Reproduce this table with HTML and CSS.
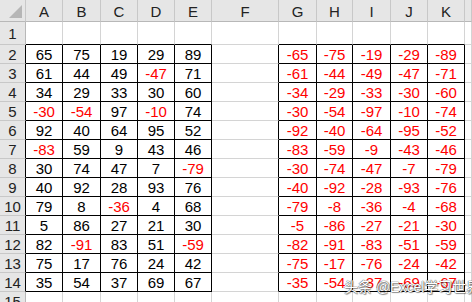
FILE: index.html
```html
<!DOCTYPE html>
<html lang="zh">
<head>
<meta charset="utf-8">
<title>Excel</title>
<link rel="stylesheet" href="styles.css">
</head>
<body>
<div class="sheet">
  <div class="row hdr"><span class="corner"><i class="tri"></i></span><span>A</span><span>B</span><span>C</span><span>D</span><span>E</span><span>F</span><span>G</span><span>H</span><span>I</span><span>J</span><span>K</span><span></span></div>
  <div class="row r1"><span class="rh">1</span><span class="bt"></span><span class="bt"></span><span class="bt"></span><span class="bt"></span><span class="bt"></span><span></span><span class="bt"></span><span class="bt"></span><span class="bt"></span><span class="bt"></span><span class="bt"></span><span></span></div>
  <div class="row"><span class="rh bl">2</span><span class="d">65</span><span class="d">75</span><span class="d">19</span><span class="d">29</span><span class="d">89</span><span class="bl"></span><span class="d n">-65</span><span class="d n">-75</span><span class="d n">-19</span><span class="d n">-29</span><span class="d n">-89</span><span></span></div>
  <div class="row"><span class="rh bl">3</span><span class="d">61</span><span class="d">44</span><span class="d">49</span><span class="d n">-47</span><span class="d">71</span><span class="bl"></span><span class="d n">-61</span><span class="d n">-44</span><span class="d n">-49</span><span class="d n">-47</span><span class="d n">-71</span><span></span></div>
  <div class="row"><span class="rh bl">4</span><span class="d">34</span><span class="d">29</span><span class="d">33</span><span class="d">30</span><span class="d">60</span><span class="bl"></span><span class="d n">-34</span><span class="d n">-29</span><span class="d n">-33</span><span class="d n">-30</span><span class="d n">-60</span><span></span></div>
  <div class="row"><span class="rh bl">5</span><span class="d n">-30</span><span class="d n">-54</span><span class="d">97</span><span class="d n">-10</span><span class="d">74</span><span class="bl"></span><span class="d n">-30</span><span class="d n">-54</span><span class="d n">-97</span><span class="d n">-10</span><span class="d n">-74</span><span></span></div>
  <div class="row"><span class="rh bl">6</span><span class="d">92</span><span class="d">40</span><span class="d">64</span><span class="d">95</span><span class="d">52</span><span class="bl"></span><span class="d n">-92</span><span class="d n">-40</span><span class="d n">-64</span><span class="d n">-95</span><span class="d n">-52</span><span></span></div>
  <div class="row"><span class="rh bl">7</span><span class="d n">-83</span><span class="d">59</span><span class="d">9</span><span class="d">43</span><span class="d">46</span><span class="bl"></span><span class="d n">-83</span><span class="d n">-59</span><span class="d n">-9</span><span class="d n">-43</span><span class="d n">-46</span><span></span></div>
  <div class="row"><span class="rh bl">8</span><span class="d">30</span><span class="d">74</span><span class="d">47</span><span class="d">7</span><span class="d n">-79</span><span class="bl"></span><span class="d n">-30</span><span class="d n">-74</span><span class="d n">-47</span><span class="d n">-7</span><span class="d n">-79</span><span></span></div>
  <div class="row"><span class="rh bl">9</span><span class="d">40</span><span class="d">92</span><span class="d">28</span><span class="d">93</span><span class="d">76</span><span class="bl"></span><span class="d n">-40</span><span class="d n">-92</span><span class="d n">-28</span><span class="d n">-93</span><span class="d n">-76</span><span></span></div>
  <div class="row"><span class="rh bl">10</span><span class="d">79</span><span class="d">8</span><span class="d n">-36</span><span class="d">4</span><span class="d">68</span><span class="bl"></span><span class="d n">-79</span><span class="d n">-8</span><span class="d n">-36</span><span class="d n">-4</span><span class="d n">-68</span><span></span></div>
  <div class="row"><span class="rh bl">11</span><span class="d">5</span><span class="d">86</span><span class="d">27</span><span class="d">21</span><span class="d">30</span><span class="bl"></span><span class="d n">-5</span><span class="d n">-86</span><span class="d n">-27</span><span class="d n">-21</span><span class="d n">-30</span><span></span></div>
  <div class="row"><span class="rh bl">12</span><span class="d">82</span><span class="d n">-91</span><span class="d">83</span><span class="d">51</span><span class="d n">-59</span><span class="bl"></span><span class="d n">-82</span><span class="d n">-91</span><span class="d n">-83</span><span class="d n">-51</span><span class="d n">-59</span><span></span></div>
  <div class="row"><span class="rh bl">13</span><span class="d">75</span><span class="d">17</span><span class="d">76</span><span class="d">24</span><span class="d">42</span><span class="bl"></span><span class="d n">-75</span><span class="d n">-17</span><span class="d n">-76</span><span class="d n">-24</span><span class="d n">-42</span><span></span></div>
  <div class="row"><span class="rh bl">14</span><span class="d">35</span><span class="d">54</span><span class="d">37</span><span class="d">69</span><span class="d">67</span><span class="bl"></span><span class="d n">-35</span><span class="d n">-54</span><span class="d n">-37</span><span class="d n">-69</span><span class="d n">-67</span><span></span></div>
  <div class="row"><span class="rh">15</span><span></span><span></span><span></span><span></span><span></span><span></span><span></span><span></span><span></span><span></span><span></span><span></span></div>
  <div class="watermark">头条 @Excel学习世界</div>
</div>
</body>
</html>
```
FILE: styles.css
```css
body {
  margin: 0;
  background: #fff;
  font-family: "Liberation Sans", Arial, sans-serif;
}
.sheet {
  position: relative;
  width: 472px;
  height: 302px;
  overflow: hidden;
}
.row {
  display: grid;
  grid-template-columns: 26px 37px 38px 37px 37px 37px 67px 38px 36px 38px 37px 37px 1fr;
  height: 19px;
}
.row > span {
  box-sizing: border-box;
  border-right: 1px solid #d4d4d4;
  border-bottom: 1px solid #d4d4d4;
  display: flex;
  align-items: center;
  justify-content: center;
  font-size: 15px;
  color: #000;
  line-height: 1;
  padding-top: 1px;
}
.hdr { height: 22px; }
.hdr > span {
  background: #e6e6e6;
  border-right-color: #c8c8c8;
  border-bottom-color: #b8b8b8;
  color: #222;
}
.r1 { height: 23px; }
.row > .rh {
  background: #e6e6e6;
  border-right-color: #b8b8b8;
  border-bottom-color: #c8c8c8;
  color: #222;
}
.row > .d {
  border-right-color: #000;
  border-bottom-color: #000;
}
.row > .bt { border-bottom-color: #000; }
.row > .bl { border-right-color: #000; }
.row > .n { color: #ff0000; }
.corner { position: relative; }
.tri {
  position: absolute;
  right: 3px;
  bottom: 3px;
  width: 0;
  height: 0;
  border-left: 13px solid transparent;
  border-bottom: 13px solid #b6b6b6;
}
.watermark {
  position: absolute;
  left: 344px;
  top: 276px;
  font-family: "Liberation Sans", "Noto Sans CJK SC", sans-serif;
  font-size: 14px;
  color: #fff;
  white-space: nowrap;
  text-shadow: 0 0 1px #444, 0 0 1px #444, 1px 1px 1px rgba(0,0,0,0.4);
}
```
